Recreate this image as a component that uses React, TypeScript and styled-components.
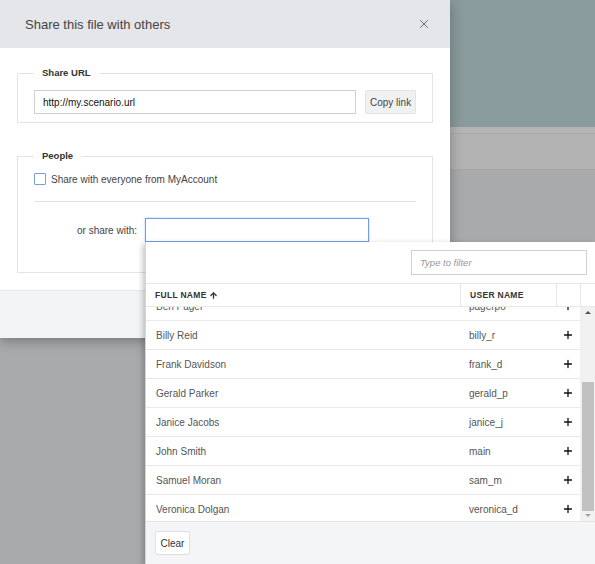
import styled, { createGlobalStyle } from "styled-components";
import { X, Plus, ArrowUp } from "lucide-react";

interface UserType {
  id: number;
  name: string;
  login: string;
}

const users: UserType[] = [
  { id: 1, name: "Alan Turner", login: "alan_t" },
  { id: 2, name: "Amy Foster", login: "amy_f" },
  { id: 3, name: "Anna White", login: "anna_w" },
  { id: 4, name: "Ben Pager", login: "pagerpo" },
  { id: 5, name: "Billy Reid", login: "billy_r" },
  { id: 6, name: "Frank Davidson", login: "frank_d" },
  { id: 7, name: "Gerald Parker", login: "gerald_p" },
  { id: 8, name: "Janice Jacobs", login: "janice_j" },
  { id: 9, name: "John Smith", login: "main" },
  { id: 10, name: "Samuel Moran", login: "sam_m" },
  { id: 11, name: "Veronica Dolgan", login: "veronica_d" },
];

const GlobalStyle = createGlobalStyle`
  * { box-sizing: border-box; }
  body {
    margin: 0;
    font-family: "Liberation Sans", Arial, sans-serif;
    overflow: hidden;
  }
`;

const App = () => {
  return (
    <>
      <GlobalStyle />
      <Page>
        <TopBand />
        <ToolBand />
        <LowerArea />
        <Modal>
          <ModalHeader>
            <Title>Share this file with others</Title>
            <CloseButton>
              <X size={14} strokeWidth={1.4} />
            </CloseButton>
          </ModalHeader>
          <ModalBody>
            <Group>
              <Legend>Share URL</Legend>
              <UrlRow>
                <UrlInput defaultValue="http://my.scenario.url" readOnly />
                <GrayButton>Copy link</GrayButton>
              </UrlRow>
            </Group>
            <Group $spaced>
              <Legend>People</Legend>
              <CheckRow>
                <CheckBox />
                <span>Share with everyone from MyAccount</span>
              </CheckRow>
              <Divider />
              <ShareRow>
                <ShareLabel>or share with:</ShareLabel>
                <Picker>
                  <PickerInput />
                  <Dropdown>
                    <FilterBar>
                      <FilterInput placeholder="Type to filter" />
                    </FilterBar>
                    <HeadRow>
                      <HeadCell>
                        FULL NAME <ArrowUp size={9} strokeWidth={3.5} />
                      </HeadCell>
                      <HeadCell $divided>USER NAME</HeadCell>
                      <HeadCell $divided />
                      <HeadCell $divided />
                    </HeadRow>
                    <TableBody>
                      <List>
                        <Rows>
                          {users.map((user) => (
                            <Row key={user.id}>
                              <NameCell>{user.name}</NameCell>
                              <LoginCell>{user.login}</LoginCell>
                              <AddCell>
                                <Plus size={12} strokeWidth={2.6} />
                              </AddCell>
                            </Row>
                          ))}
                        </Rows>
                      </List>
                      <ScrollTrack>
                        <ArrowTop />
                        <TrackSpace />
                        <Thumb />
                        <ArrowBottom />
                      </ScrollTrack>
                    </TableBody>
                    <DropFooter>
                      <ClearButton>Clear</ClearButton>
                    </DropFooter>
                  </Dropdown>
                </Picker>
              </ShareRow>
            </Group>
          </ModalBody>
          <ModalFooter />
        </Modal>
      </Page>
    </>
  );
};

const Page = styled.div`
  position: relative;
  width: 100%;
  height: 564px;
  display: grid;
  grid-template-rows: 127px 43px 1fr;
  background: #a9aaac;
`;
const TopBand = styled.div`
  background: #8a9b9d;
`;
const ToolBand = styled.div`
  background: #b3b3b3;
  border-top: 6px solid #b5b5b5;
  box-shadow: inset 0 1px 0 #aaaaaa;
  border-bottom: 1px solid #a6a6a6;
`;
const LowerArea = styled.div`
  background: #a9aaac;
`;

const Modal = styled.div`
  position: absolute;
  top: 0;
  left: 0;
  width: 450px;
  background: #fff;
  box-shadow: 0 3px 12px rgba(0, 0, 0, 0.3);
`;
const ModalHeader = styled.div`
  height: 48px;
  background: #e5e6e9;
  display: flex;
  align-items: center;
  justify-content: space-between;
  padding: 0 19px 0 25px;
`;
const Title = styled.h1`
  margin: 0;
  font-size: 13px;
  font-weight: 400;
  color: #444;
`;
const CloseButton = styled.button`
  border: 0;
  background: none;
  padding: 0;
  display: flex;
  color: #555;
`;
const ModalBody = styled.div`
  padding: 19px 17px 17px;
`;
const Group = styled.fieldset<{ $spaced?: boolean }>`
  margin: ${(p) => (p.$spaced ? "27px" : "0")} 0 0;
  padding: ${(p) => (p.$spaced ? "9px 16px 30px" : "11px 16px 8px")};
  border: 1px solid #e3e4e6;
  min-width: 0;
`;
const Legend = styled.legend`
  padding: 0 8px;
  font-size: 9.5px;
  font-weight: 700;
  color: #333;
  line-height: 12px;
`;
const UrlRow = styled.div`
  display: flex;
  gap: 9px;
`;
const UrlInput = styled.input`
  width: 323px;
  height: 24px;
  border: 1px solid #cfcfd2;
  padding: 0 8px;
  font: 10px "Liberation Sans", Arial, sans-serif;
  color: #111;
  outline: none;
`;
const GrayButton = styled.button`
  width: 51px;
  height: 24px;
  padding: 0;
  white-space: nowrap;
  background: #f0f1f3;
  border: 1px solid #e2e3e5;
  border-radius: 2px;
  font: 10px "Liberation Sans", Arial, sans-serif;
  color: #444;
`;
const CheckRow = styled.label`
  display: flex;
  align-items: center;
  gap: 5px;
  font-size: 10px;
  color: #444;
  height: 14px;
  margin-top: 1px;
`;
const CheckBox = styled.span`
  width: 12px;
  height: 12px;
  border: 1px solid #7b9de4;
  border-radius: 1px;
  background: #fff;
`;
const Divider = styled.div`
  height: 1px;
  background: #e3e4e6;
  margin: 15px 0 16px;
`;
const ShareRow = styled.div`
  display: flex;
  align-items: center;
  gap: 8px;
`;
const ShareLabel = styled.span`
  width: 103px;
  text-align: right;
  font-size: 10px;
  color: #444;
`;
const Picker = styled.div`
  position: relative;
`;
const PickerInput = styled.input`
  display: block;
  width: 224px;
  height: 24px;
  border: 1px solid #6f9cf0;
  outline: none;
  box-shadow: 0 0 2px rgba(111, 156, 240, 0.5);
`;
const ModalFooter = styled.div`
  height: 48px;
  background: #f3f4f6;
  border-top: 1px solid #e6e7e9;
`;

const Dropdown = styled.div`
  position: absolute;
  top: 100%;
  left: 0;
  width: 450px;
  height: 322px;
  background: #fff;
  border-left: 1px solid #d6d6d6;
  box-shadow: -2px 2px 6px rgba(0, 0, 0, 0.25);
  display: flex;
  flex-direction: column;
  z-index: 10;
`;
const FilterBar = styled.div`
  height: 41px;
  display: flex;
  justify-content: flex-end;
  padding: 8px 8px 0;
`;
const FilterInput = styled.input`
  width: 176px;
  height: 25px;
  border: 1px solid #cfd0d3;
  padding: 0 8px;
  outline: none;
  font: italic 9.5px "Liberation Sans", Arial, sans-serif;
  &::placeholder {
    color: #999;
  }
`;
const HeadRow = styled.div`
  display: grid;
  grid-template-columns: 314px 96px 24px 1fr;
  height: 24px;
  border-top: 1px solid #e6e7e9;
  border-bottom: 1px solid #e6e7e9;
`;
const HeadCell = styled.div<{ $divided?: boolean }>`
  display: flex;
  align-items: center;
  gap: 2px;
  padding-left: 9px;
  font-size: 8.5px;
  font-weight: 700;
  letter-spacing: 0.3px;
  color: #333;
  border-left: ${(p) => (p.$divided ? "1px solid #e6e7e9" : "0")};
`;
const TableBody = styled.div`
  display: flex;
  height: 214px;
`;
const List = styled.div`
  width: 434px;
  overflow: hidden;
  display: flex;
  flex-direction: column;
  justify-content: flex-end;
`;
const Rows = styled.div`
  margin-bottom: -3px;
`;
const Row = styled.div`
  display: grid;
  grid-template-columns: 314px 96px 24px;
  height: 29px;
  align-items: center;
  border-bottom: 1px solid #e8e9eb;
  font-size: 10px;
  color: #555;
`;
const NameCell = styled.span`
  padding-left: 10px;
`;
const LoginCell = styled.span`
  padding-left: 9px;
`;
const AddCell = styled.span`
  display: flex;
  justify-content: center;
  color: #111;
`;
const ScrollTrack = styled.div`
  flex: 1;
  display: flex;
  flex-direction: column;
  align-items: center;
  background: #f1f1f1;
`;
const ArrowTop = styled.div`
  width: 0;
  height: 0;
  border-left: 3px solid transparent;
  border-right: 3px solid transparent;
  border-bottom: 3px solid #505050;
  margin: 4px 0 3px;
`;
const TrackSpace = styled.div`
  flex: 1;
`;
const Thumb = styled.div`
  width: 12px;
  height: 129px;
  background: #c1c1c1;
`;
const ArrowBottom = styled.div`
  width: 0;
  height: 0;
  border-left: 3px solid transparent;
  border-right: 3px solid transparent;
  border-top: 3px solid #a3a3a3;
  margin: 3px 0 4px;
`;
const DropFooter = styled.div`
  flex: 1;
  background: #f4f5f7;
  border-top: 1px solid #e3e4e6;
  padding: 9px 9px;
`;
const ClearButton = styled.button`
  width: 35px;
  height: 24px;
  padding: 0;
  background: #fff;
  border: 1px solid #dfe0e2;
  border-radius: 2px;
  font: 10px "Liberation Sans", Arial, sans-serif;
  color: #333;
`;

export default App;
